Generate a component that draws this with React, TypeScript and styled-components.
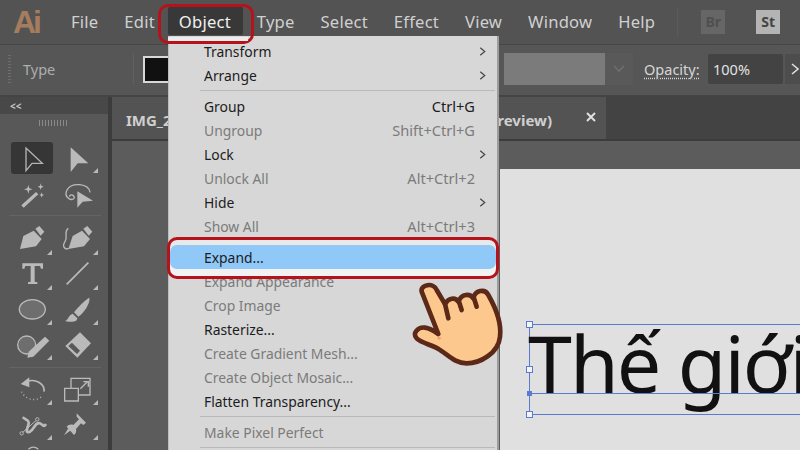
import { Fragment, type ReactNode } from "react";
import styled, { createGlobalStyle } from "styled-components";

const GlobalStyle = createGlobalStyle`
  html, body {
    margin: 0;
    padding: 0;
    background: #535353;
  }
`;

const Page = styled.div`
  position: relative;
  display: flex;
  flex-direction: column;
  width: 800px;
  height: 450px;
  overflow: hidden;
  background: #535353;
  font-family: "Noto Sans", "Open Sans", sans-serif;
`;

const MenuBar = styled.div`
  display: flex;
  align-items: center;
  height: 45px;
  flex: none;
  box-sizing: border-box;
  padding-left: 13px;
  background: #535353;
  border-bottom: 1px solid #464646;

  & > * {
    flex: none;
  }
`;

const Logo = styled.div`
  width: 45px;
  font-family: "Liberation Sans", sans-serif;
  font-size: 32px;
  font-weight: 700;
  color: #a67c5e;
  letter-spacing: -3px;
`;

const MenuLabel = styled.div<{ $active?: boolean }>`
  display: flex;
  align-items: center;
  height: 28px;
  margin: -2px ${(p) => (p.$active ? "1px" : "0")} 0 0;
  box-sizing: border-box;
  padding: 0 ${(p) => (p.$active ? "12px 0 11px" : "13px")};
  border-radius: 2px;
  font-size: 16.6px;
  letter-spacing: 0.2px;
  color: ${(p) => (p.$active ? "#f0f0f0" : "#d0d0d0")};
  background: ${(p) => (p.$active ? "#383838" : "transparent")};
`;

const BarDivider = styled.div`
  width: 1px;
  height: 30px;
  margin: 0 23px 0 9px;
  background: #5b5b5b;
`;

const AppBadge = styled.div<{ $lit?: boolean }>`
  display: flex;
  align-items: center;
  justify-content: center;
  width: 24px;
  height: 24px;
  margin: -1px 31px 0 0;
  font-size: 14px;
  font-weight: 700;
  color: ${(p) => (p.$lit ? "#444444" : "#4f4f4f")};
  background: ${(p) => (p.$lit ? "#b4b4b4" : "#666666")};
`;

const ControlBar = styled.div`
  display: flex;
  align-items: center;
  height: 52px;
  flex: none;
  box-sizing: border-box;
  padding: 0 0 2px 8px;
  background: #565656;
  border-bottom: 2px solid #444444;

  & > * {
    flex: none;
  }
`;

const Grip = styled.div`
  width: 3px;
  height: 28px;
  margin-right: 12px;
  background: repeating-linear-gradient(to bottom, #6e6e6e 0 1px, transparent 1px 3px);
`;

const TypeLabel = styled.div`
  width: 110px;
  font-size: 14.5px;
  color: #aeaeae;
`;

const Divider = styled.div`
  width: 1px;
  height: 32px;
  margin-right: 9px;
  background: #5f5f5f;
`;

const Swatch = styled.div`
  width: 36px;
  height: 23px;
  margin-right: 321px;
  border: 2px solid #d8d8d8;
  background: #111111;
`;

const StyleField = styled.div`
  width: 101px;
  height: 32px;
  background: #7b7b7b;
`;

const ChevronBox = styled.div`
  display: flex;
  align-items: center;
  justify-content: center;
  width: 28px;
  height: 32px;
  margin-right: 11px;
  background: #595959;
`;

const OpacityLabel = styled.div`
  width: 54px;
  margin-right: 10px;
  font-size: 14.5px;
  white-space: nowrap;
  color: #d6d6d6;
  text-decoration: underline dotted #d6d6d6;
  text-underline-offset: 3px;
`;

const OpacityField = styled.div`
  display: flex;
  align-items: center;
  width: 75px;
  height: 30px;
  box-sizing: border-box;
  padding-left: 5px;
  margin-right: 2px;
  border-radius: 2px;
  font-size: 14.5px;
  color: #e2e2e2;
  background: #434343;
`;

const OpacityArrow = styled.div`
  display: flex;
  align-items: center;
  justify-content: center;
  width: 20px;
  height: 30px;
  background: #4d4d4d;
`;

const Workspace = styled.div`
  display: flex;
  flex: 1;
  min-height: 0;
`;

const Toolbox = styled.div`
  display: flex;
  flex-direction: column;
  width: 108px;
  flex: none;
  overflow: hidden;
  background: #585858;
`;

const ToolboxHeader = styled.div`
  display: flex;
  align-items: center;
  height: 17px;
  flex: none;
  padding-left: 10px;
  font-size: 10px;
  font-weight: 700;
  color: #c8c8c8;
  background: #484848;
`;

const ToolGrip = styled.div`
  width: 28px;
  height: 6px;
  flex: none;
  margin: 6px 0 15px 39px;
  background: repeating-linear-gradient(to right, #8a8a8a 0 1px, transparent 1px 3px);
`;

const ToolGrid = styled.div`
  display: grid;
  grid-template-columns: 46px 46px;
  padding-left: 9px;
`;

const ToolCell = styled.div`
  position: relative;
  height: 35px;
  width: 42px;
  margin-left: 2px;
`;

const SelectedBack = styled.div`
  position: absolute;
  inset: 1px 0 2px;
  border-radius: 3px;
  background: #363636;
`;

const ToolSvg = styled.svg`
  position: relative;
  display: block;
`;

const Corner = styled.span`
  position: absolute;
  right: 1px;
  bottom: 3px;
  width: 0;
  height: 0;
  border-left: 5px solid transparent;
  border-bottom: 5px solid #b9b9b9;
`;

const ToolSeparator = styled.div<{ $below: number }>`
  grid-column: 1 / 3;
  width: 92px;
  height: 1px;
  margin: 4px 0 ${(p) => p.$below}px;
  background: #646464;
`;

const Gutter = styled.div`
  width: 4px;
  flex: none;
  background: #3c3c3c;
`;

const Documents = styled.div`
  display: flex;
  flex-direction: column;
  flex: 1;
  min-width: 0;
`;

const TabRow = styled.div`
  display: flex;
  height: 42px;
  flex: none;
  background: #434343;
  border-bottom: 2px solid #3c3c3c;
`;

const Tab = styled.div`
  display: flex;
  align-items: center;
  width: 494px;
  box-sizing: border-box;
  padding: 3px 10px 0 14px;
  font-size: 15px;
  font-weight: 700;
  color: #cfcfcf;
  background: #535353;
`;

const TabTail = styled.span`
  margin-left: auto;
`;

const TabClose = styled.svg`
  margin: -5px 0 0 34px;
`;

const CanvasArea = styled.div`
  display: flex;
  flex-direction: column;
  flex: 1;
  align-items: flex-end;
  padding-top: 28px;
  background: #5c5c5c;
`;

const Artboard = styled.div`
  width: 300px;
  flex: 1;
  box-sizing: border-box;
  padding: 155px 0 0 29px;
  overflow: hidden;
  background: #e0e0e0;
`;

const TextFrame = styled.div`
  position: relative;
  width: 400px;
  height: 89px;
  border-top: 1px solid #5b7bd0;
  border-bottom: 1px solid #5b7bd0;
  border-left: 1px solid #5b7bd0;
`;

const Headline = styled.div`
  position: absolute;
  left: -2px;
  top: -16px;
  font-size: 79px;
  line-height: 107px;
  letter-spacing: -2px;
  color: #111111;
  white-space: nowrap;
`;

const Baseline = styled.div`
  position: absolute;
  left: 0;
  right: 0;
  top: 68px;
  height: 1px;
  background: #5b7bd0;
`;

const Handle = styled.div<{ $top: number }>`
  position: absolute;
  left: -4px;
  top: ${(p) => p.$top}px;
  width: 5px;
  height: 5px;
  border: 1px solid #5b7bd0;
  background: #f4f4f4;
`;

const AnchorHandle = styled.div`
  position: absolute;
  left: -3px;
  top: 66px;
  width: 5px;
  height: 5px;
  background: #5b7bd0;
`;

const DropMenu = styled.div`
  position: absolute;
  left: 168px;
  top: 36px;
  width: 331px;
  height: 420px;
  box-sizing: border-box;
  padding-top: 3px;
  background: #d7d7d7;
  border-right: 2px solid #9c9c9c;
  border-left: 1px solid #bdbdbd;
`;

const MenuRow = styled.div<{ $disabled?: boolean; $hover?: boolean }>`
  display: flex;
  align-items: center;
  height: 24px;
  box-sizing: border-box;
  padding: 0 10px 0 ${(p) => (p.$hover ? "34px" : "35px")};
  font-size: 13.9px;
  color: ${(p) => (p.$disabled ? "#7b7b7b" : "#1c1c1c")};
  background: ${(p) => (p.$hover ? "#90c8f8" : "transparent")};
  margin: ${(p) => (p.$hover ? "0 1px" : "0")};
`;

const RowLabel = styled.span`
  flex: 1;
`;

const Shortcut = styled.span`
  margin-right: 12px;
  font-size: 14.6px;
`;

const Submenu = styled.span`
  display: flex;
  margin-right: 0;
`;

const MenuSeparator = styled.div`
  height: 1px;
  margin: 3px 2px 3px 31px;
  background: #b9b9b9;
`;

const Highlight = styled.div`
  position: absolute;
  box-sizing: border-box;
  border: 3px solid #b5121b;
  border-radius: 10px;
`;

const ObjectRing = styled(Highlight)`
  left: 158px;
  top: 4px;
  width: 96px;
  height: 40px;

  &::after {
    content: "";
    position: absolute;
    left: 7px;
    right: 3px;
    bottom: 0;
    height: 4px;
    background: #ececec;
  }
`;

const ExpandRing = styled(Highlight)`
  left: 167px;
  top: 237px;
  width: 332px;
  height: 42px;
  box-shadow: inset 0 -7px 0 #f2f2f2, inset 0 5px 0 #e9e9e9;
`;

const HandCursor = styled.svg`
  position: absolute;
  left: 411px;
  top: 281px;
`;

const menuItems: {
  label?: string;
  key?: string;
  sub?: boolean;
  sep?: boolean;
  disabled?: boolean;
  hover?: boolean;
}[] = [
  { label: "Transform", sub: true },
  { label: "Arrange", sub: true },
  { sep: true },
  { label: "Group", key: "Ctrl+G" },
  { label: "Ungroup", key: "Shift+Ctrl+G", disabled: true },
  { label: "Lock", sub: true },
  { label: "Unlock All", key: "Alt+Ctrl+2", disabled: true },
  { label: "Hide", sub: true },
  { label: "Show All", key: "Alt+Ctrl+3", disabled: true },
  { sep: true },
  { label: "Expand...", hover: true },
  { label: "Expand Appearance", disabled: true },
  { label: "Crop Image", disabled: true },
  { label: "Rasterize..." },
  { label: "Create Gradient Mesh...", disabled: true },
  { label: "Create Object Mosaic...", disabled: true },
  { label: "Flatten Transparency..." },
  { sep: true },
  { label: "Make Pixel Perfect", disabled: true },
  { sep: true },
];

const Chevron = ({ dir, color, size = 12 }: { dir: "right" | "down"; color: string; size?: number }) => (
  <svg width={size} height={size} viewBox="0 0 12 12" fill="none" stroke={color} strokeWidth="1.6">
    {dir === "right" ? <path d="M3 1l6 5-6 5" /> : <path d="M1 3l5 5 5-5" />}
  </svg>
);

const c = "#bababa";
const back = "#585858";

// drawn at 3x, in toolbox coordinates; each cell shows its own window of them
const tools: { top: number; col: number; el?: ReactNode; corner?: boolean; selected?: boolean; sepBefore?: number }[] = [
  {
    top: 33,
    col: 0,
    selected: true,
    el: <path d="M78 54V122L96 100H127Z" fill="none" stroke="#b4b4b4" strokeWidth="4" />,
  },
  { top: 33, col: 1, corner: true, el: <path d="M212 52V126L233 100H265Z" fill={c} /> },
  {
    top: 138,
    col: 0,
    el: (
      <g fill={c}>
        <path d="M64 226L108 186L115 193L71 233Z" />
        <path d="M85 165L88 175L98 178L88 181L85 191L82 181L72 178L82 175ZM122 160L124 167L131 170L124 173L122 180L120 173L113 170L120 167ZM125 187L127 193L132 195L127 197L125 203L123 197L118 195L123 193Z" />
      </g>
    ),
  },
  {
    top: 138,
    col: 1,
    el: (
      <g>
        <path
          d="M270 187C266 160 215 155 201 180C190 200 214 216 222 205C226 196 210 190 208 200"
          fill="none"
          stroke={c}
          strokeWidth="4"
        />
        <path d="M232 184V233L248 215L279 212Z" fill={c} />
      </g>
    ),
  },
  {
    top: 279,
    col: 0,
    corner: true,
    sepBefore: 7,
    el: (
      <g fill={c}>
        <path d="M60 357L70 318L101 302L125 327L108 349Z" />
        <path d="M106 296L118 288L133 305L122 317Z" />
      </g>
    ),
  },
  {
    top: 279,
    col: 1,
    corner: true,
    el: (
      <g>
        <path d="M205 357L218 318L246 302L270 327L252 349Z" fill={c} />
        <path d="M250 296L262 288L277 305L266 317Z" fill={c} />
        <path d="M205 295C190 305 205 320 195 335C185 350 195 360 206 355" fill="none" stroke={c} strokeWidth="4" />
      </g>
    ),
  },
  {
    top: 384,
    col: 0,
    corner: true,
    el: <path d="M67 400H129V416H123L120 408H104V455L112 457V462H84V457L92 455V408H76L73 416H67Z" fill={c} />,
  },
  { top: 384, col: 1, corner: true, el: <path d="M200 463L265 398" stroke={c} strokeWidth="5" /> },
  {
    top: 489,
    col: 0,
    corner: true,
    el: <ellipse cx="97" cy="538" rx="39" ry="29" fill="#6e6e6e" stroke={c} strokeWidth="4" />,
  },
  {
    top: 489,
    col: 1,
    corner: true,
    el: (
      <g fill={c}>
        <path d="M268 503C272 520 250 550 235 560L222 547C235 530 255 510 268 503Z" />
        <path d="M218 551L232 565C232 576 215 578 195 573C205 570 205 555 218 551Z" />
      </g>
    ),
  },
  {
    top: 594,
    col: 0,
    corner: true,
    el: (
      <g>
        <circle cx="80" cy="645" r="27" fill="#6e6e6e" stroke={c} strokeWidth="4" />
        <path d="M135 620L148 632L100 680L82 683L86 665Z" fill={c} />
      </g>
    ),
  },
  {
    top: 594,
    col: 1,
    corner: true,
    el: (
      <g>
        <path d="M240 607L273 640L232 683L196 648Z" fill={c} />
        <path d="M205 648L216 638L240 662L231 672Z" fill={back} />
      </g>
    ),
  },
  {
    top: 729,
    col: 0,
    corner: true,
    sepBefore: 5,
    el: (
      <g fill="none" stroke={c}>
        <path d="M80 755C105 745 135 760 132 785" strokeWidth="5" />
        <path d="M62 762L88 742V772Z" fill={c} stroke="none" />
        <path d="M65 785C72 805 105 820 128 797" strokeWidth="4" strokeDasharray="3 8" />
      </g>
    ),
  },
  {
    top: 729,
    col: 1,
    corner: true,
    el: (
      <g fill="none" stroke={c} strokeWidth="4">
        <path d="M213 775V745H270V795H235" />
        <path d="M194 775H235V813H194Z" />
        <path d="M241 776L262 755M250 755H265V770" />
      </g>
    ),
  },
  {
    top: 834,
    col: 0,
    corner: true,
    el: (
      <g fill="none" stroke={c}>
        <path d="M68 862C78 870 90 870 85 885C80 900 76 910 90 905C105 895 105 875 120 880C130 885 132 893 138 882" strokeWidth="8" />
        <path d="M65 910L112 868" strokeWidth="3" />
        <circle cx="65" cy="910" r="5" strokeWidth="3" fill={back} />
        <circle cx="112" cy="868" r="5" strokeWidth="3" fill={back} />
      </g>
    ),
  },
  {
    top: 834,
    col: 1,
    corner: true,
    el: <path d="M230 850L258 878L250 885L243 880L228 897C230 905 228 910 222 915L200 890C205 885 212 882 220 885L237 868L230 860ZM214 900L192 916L204 896Z" fill={c} />,
  },
  { top: 939, col: 0, el: <path d="M85 958Q100 945 115 958" fill="none" stroke={c} strokeWidth="4" /> },
];

const App = () => {
  return (
    <Page>
      <GlobalStyle />
      <MenuBar>
        <Logo>Ai</Logo>
        <MenuLabel>File</MenuLabel>
        <MenuLabel>Edit</MenuLabel>
        <MenuLabel $active>Object</MenuLabel>
        <MenuLabel>Type</MenuLabel>
        <MenuLabel>Select</MenuLabel>
        <MenuLabel>Effect</MenuLabel>
        <MenuLabel>View</MenuLabel>
        <MenuLabel>Window</MenuLabel>
        <MenuLabel>Help</MenuLabel>
        <BarDivider />
        <AppBadge>Br</AppBadge>
        <AppBadge $lit>St</AppBadge>
      </MenuBar>
      <ControlBar>
        <Grip />
        <TypeLabel>Type</TypeLabel>
        <Divider />
        <Swatch />
        <StyleField />
        <ChevronBox>
          <Chevron dir="down" color="#6e6e6e" />
        </ChevronBox>
        <OpacityLabel>Opacity:</OpacityLabel>
        <OpacityField>100%</OpacityField>
        <OpacityArrow>
          <Chevron dir="right" color="#e0e0e0" />
        </OpacityArrow>
      </ControlBar>
      <Workspace>
        <Toolbox>
          <ToolboxHeader>&lt;&lt;</ToolboxHeader>
          <ToolGrip />
          <ToolGrid>
            {tools.map((t, i) => (
              <Fragment key={i}>
                {t.sepBefore !== undefined && <ToolSeparator $below={t.sepBefore} />}
                <ToolCell>
                  {t.selected && <SelectedBack />}
                  <ToolSvg width="42" height="35" viewBox={`${t.col === 0 ? 33 : 171} ${t.top} 126 105`}>
                    {t.el}
                  </ToolSvg>
                  {t.corner && <Corner />}
                </ToolCell>
              </Fragment>
            ))}
          </ToolGrid>
        </Toolbox>
        <Gutter />
        <Documents>
          <TabRow>
            <Tab>
              <span>IMG_2</span>
              <TabTail>review)</TabTail>
              <TabClose width="10" height="10" viewBox="0 0 10 10" stroke="#e0e0e0" strokeWidth="2">
                <path d="M1 1l8 8M9 1l-8 8" />
              </TabClose>
            </Tab>
          </TabRow>
          <CanvasArea>
            <Artboard>
              <TextFrame>
                <Headline>Thế giới</Headline>
                <Baseline />
                <Handle $top={-4} />
                <Handle $top={41} />
                <Handle $top={86} />
                <AnchorHandle />
              </TextFrame>
            </Artboard>
          </CanvasArea>
        </Documents>
      </Workspace>
      <DropMenu>
        {menuItems.map((m, i) =>
          m.sep ? (
            <MenuSeparator key={i} />
          ) : (
            <MenuRow key={i} $disabled={m.disabled} $hover={m.hover}>
              <RowLabel>{m.label}</RowLabel>
              {m.key && <Shortcut>{m.key}</Shortcut>}
              {m.sub && (
                <Submenu>
                  <Chevron dir="right" color="#444444" size={9} />
                </Submenu>
              )}
            </MenuRow>
          )
        )}
      </DropMenu>
      <ObjectRing />
      <ExpandRing />
      <HandCursor width="94" height="88" viewBox="93 153 282 264">
        <path
          d="M125 185C120 165 160 155 170 180L195 222C205 205 225 200 235 215C245 190 270 190 280 205C285 180 315 175 325 195C345 230 365 280 360 320C355 370 300 400 260 400C225 400 205 375 180 360C160 345 125 340 110 325C95 310 115 290 135 293C150 295 165 305 175 312Z"
          fill="#fcc88e"
          stroke="#5c2818"
          strokeWidth="14"
          strokeLinejoin="round"
        />
        <path d="M172 318L185 325L175 330Z" fill="#ef9a78" />
        <path d="M195 222L205 265M237 215L245 240M282 205L290 230" stroke="#5c2818" strokeWidth="14" strokeLinecap="round" fill="none" />
      </HandCursor>
    </Page>
  );
};

export default App;
